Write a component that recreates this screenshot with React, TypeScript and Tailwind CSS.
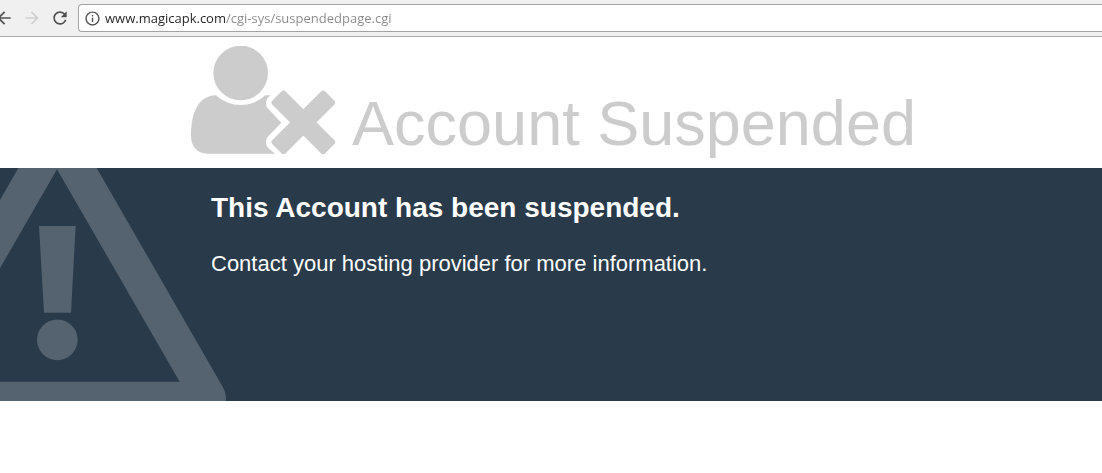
import React from "react";
import { MdArrowBack, MdArrowForward, MdInfoOutline, MdRefresh } from "react-icons/md";

const UserTimesIcon = () => (
  <svg viewBox="30 30 438 324" className="h-[108px] w-[146px] shrink-0 fill-current" aria-hidden="true">
    <circle cx="182" cy="111" r="82" />
    <path d="M108 178 A108 108 0 0 0 256 178 H272 C262 184 258 194 258 203 C258 210 262 216 266 220 L304 260 L266 299 C256 309 255 326 265 336 L285 353 H85 C52 353 33 332 33 300 C33 232 54 179 108 178 Z" />
    <g transform="translate(370 259)">
      <rect x="-112" y="-28" width="224" height="56" rx="9" transform="rotate(45)" />
      <rect x="-112" y="-28" width="224" height="56" rx="9" transform="rotate(-45)" />
    </g>
  </svg>
);

const WarningIcon = () => (
  <svg viewBox="0 24 681 699" className="absolute bottom-0 left-0 h-[233px] w-[227px] fill-[#55626f]" aria-hidden="true">
    <path
      fillRule="evenodd"
      d="M0 120 L55 24 H290 L668 680 C677 696 678 706 678 723 H0 Z M0 325 L171 28 L539 665 H0 Z"
    />
    <path d="M117 198 H227 L213 458 H132 Z" />
    <circle cx="172" cy="539.5" r="61" />
  </svg>
);

const Toolbar = () => (
  <header className="flex h-[37px] items-center border-b border-[#a9a9a9] bg-[#f0f0f0]">
    <nav className="-ml-[10px] mr-1 flex shrink-0 text-[#505050]">
      <button type="button" aria-label="Back" className="flex w-7 justify-center">
        <MdArrowBack size={20} />
      </button>
      <button type="button" aria-label="Forward" disabled className="flex w-7 justify-center text-[#d0d0d0]">
        <MdArrowForward size={20} />
      </button>
      <button type="button" aria-label="Reload" className="flex w-7 justify-center">
        <MdRefresh size={20} />
      </button>
    </nav>
    <div className="flex h-7 grow items-center rounded-l-sm border border-r-0 border-[#a3a3a3] bg-white pl-[5px]">
      <MdInfoOutline size={17} className="shrink-0 text-[#505050]" />
      {/* host is dark, the path after it is dimmed */}
      <input
        type="text"
        aria-label="Address"
        defaultValue="www.magicapk.com/cgi-sys/suspendedpage.cgi"
        className="ml-1 min-w-0 grow bg-[linear-gradient(to_right,#222222_121px,#888888_121px)] bg-clip-text font-['Open_Sans',sans-serif] text-[13px] leading-5 text-transparent caret-black outline-none"
      />
    </div>
  </header>
);

const App = () => {
  return (
    <div className="min-h-screen bg-white font-['Liberation_Sans',Arial,sans-serif]">
      <Toolbar />

      <div className="flex items-end justify-center gap-4 pt-[9px] pb-[14px] pl-1 text-[#cccccc]">
        <UserTimesIcon />
        <h1 className="text-[63px] leading-[62px]">Account Suspended</h1>
      </div>

      <section className="relative bg-[#293a4a] px-4 pt-5 pb-[121px] text-white lg:px-0">
        <WarningIcon />
        <div className="relative mx-auto max-w-[680px]">
          <h2 className="text-[28px] leading-10 font-bold">This Account has been suspended.</h2>
          <p className="mt-5 text-[22px] leading-8">Contact your hosting provider for more information.</p>
        </div>
      </section>
    </div>
  );
};

export default App;
